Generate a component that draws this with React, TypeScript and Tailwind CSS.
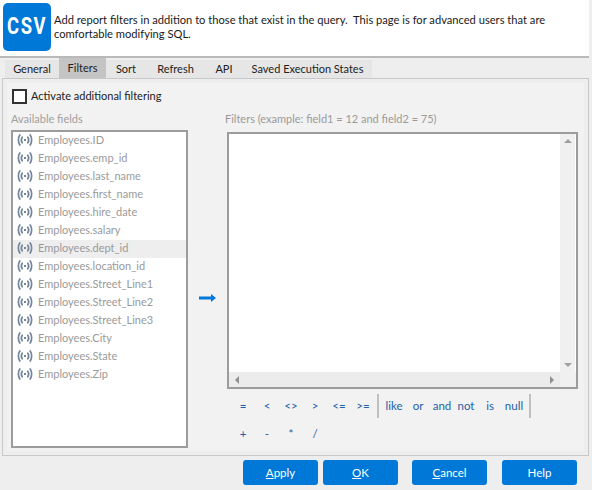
const fields = ["ID","emp_id","last_name","first_name","hire_date","salary","dept_id","location_id","Street_Line1","Street_Line2","Street_Line3","City","State","Zip"];
const tabs = ["General","Filters","Sort","Refresh","API","Saved Execution States"];
const tabW = [54,47,40,59,38,129];
const row1 = ["=","<","<>",">","<=",">="];
const row1b = ["like","or","and","not","is","null"];
const row2 = ["+","-","*","/"];

function Signal() {
  return (
    <svg width="16" height="12" viewBox="0 0 16 12" fill="none" stroke="#74869a" strokeWidth="1.7" strokeLinecap="round" className="shrink-0">
      <path d="M2.8 1C0.9 3.8 0.9 8.2 2.8 11" />
      <path d="M13.2 1C15.1 3.8 15.1 8.2 13.2 11" />
      <path d="M5.2 3.2C4.1 4.9 4.1 7.1 5.2 8.8" />
      <path d="M10.8 3.2C11.9 4.9 11.9 7.1 10.8 8.8" />
      <path d="M7 6H9" strokeWidth="2" strokeLinecap="butt" />
    </svg>
  );
}

function Op({ t }: { t: string }) {
  return <span className="w-[24px] text-center text-[#1f5fa8]">{t}</span>;
}

function Btn({ u, rest }: { u?: string; rest: string }) {
  return (
    <button className="w-[75px] h-[25px] rounded-[3px] bg-[#0078d7] text-white text-[11.5px] flex items-center justify-center">
      {u && <span className="underline">{u}</span>}{rest}
    </button>
  );
}

export default function App() {
  return (
    <div className="w-[592px] h-[490px] bg-[#eeeeee] text-[11px] overflow-hidden flex flex-col" style={{ fontFamily: '"Lato", sans-serif' }}>
      <div className="h-[58px] w-[589px] bg-white border-b-2 border-[#b9b9b9] flex items-start pl-[3px] pt-[3px] shrink-0">
        <div className="w-[48px] h-[48px] rounded-[5px] bg-[#0078d7] text-white font-bold text-[23px] flex items-center justify-center tracking-[2px] pl-[1px]" style={{ fontFamily: '"Roboto", sans-serif' }}>
          <span className="scale-x-[0.8] pt-[1px]">CSV</span>
        </div>
        <p className="ml-[3px] mt-[10px] w-[530px] leading-[14px] text-[11.15px] text-[#1a1a1a] whitespace-pre-wrap">{"Add report filters in addition to those that exist in the query.  This page is for advanced users that are\ncomfortable modifying SQL."}</p>
      </div>
      <div className="h-[20px] flex pl-[5px] shrink-0 text-[#222]">
        {tabs.map((t, i) => (
          <div key={t} style={{ width: tabW[i] }} className={"flex items-center justify-center " + (i === 1 ? "bg-[#c4c4c4] h-[20px]" : "bg-[#e6e6e6] h-[18px] mt-[2px]")}>{t}</div>
        ))}
      </div>
      <div className="ml-[2px] w-[587px] h-[378px] border border-[#c8c8c8] bg-[#eeeeee] shrink-0 p-[4px]">
        <div className="h-full bg-[#f2f2f2] flex flex-col">
          <label className="flex items-center h-[16px] mt-[5px] ml-[5px] text-[#222]">
            <span className="w-[15px] h-[15px] border-2 border-[#333] bg-white mr-[4px]" />
            Activate additional filtering
          </label>
          <div className="flex mt-[6px] ml-[4px]">
            <div className="w-[177px] flex flex-col">
              <div className="h-[20px] text-[#a0a0a0] leading-[18px]">Available fields</div>
              <div className="h-[318px] border-2 border-[#9c9c9c] bg-white text-[#9a9a9a]">
                {fields.map((f) => (
                  <div key={f} className={"h-[18px] flex items-center pl-[4px] gap-[5px] pb-[2px] " + (f === "dept_id" ? "bg-[#eeeeee]" : "")}>
                    <Signal />
                    <span>Employees.{f}</span>
                  </div>
                ))}
              </div>
            </div>
            <div className="w-[39px] flex items-center justify-center pt-[38px]">
              <svg width="17" height="8" viewBox="0 0 17 8">
                <path d="M0 2.5H12V0L17 4L12 8V5.5H0Z" fill="#0078d7" />
              </svg>
            </div>
            <div className="w-[351px] flex flex-col">
              <div className="h-[22px] ml-[-2px] text-[#9a9a9a] leading-[18px] whitespace-nowrap">Filters (example: field1 = 12 and field2 = 75)</div>
              <div className="h-[257px] border-2 border-[#9c9c9c] bg-white flex flex-col">
                <div className="flex-1 flex min-h-0">
                  <div className="flex-1" />
                  <div className="w-[15px] bg-[#f0f0f0] flex flex-col justify-between items-center py-[5px] mr-[1px]">
                    <span className="w-0 h-0 border-x-[4px] border-x-transparent border-b-[4px] border-b-[#a0a0a0]" />
                    <span className="w-0 h-0 border-x-[4px] border-x-transparent border-t-[4px] border-t-[#a0a0a0]" />
                  </div>
                </div>
                <div className="h-[15px] flex bg-[#eeeeee]">
                  <div className="w-[331px] flex items-center justify-between px-[6px] bg-[#ececec]">
                    <span className="w-0 h-0 border-y-[4px] border-y-transparent border-r-[4px] border-r-[#909090]" />
                    <span className="w-0 h-0 border-y-[4px] border-y-transparent border-l-[4px] border-l-[#909090]" />
                  </div>
                  <div className="flex-1 bg-[#f0f0f0]" />
                </div>
              </div>
              <div className="flex items-center h-[24px] mt-[5px] ml-[4px] text-[11.5px]">
                {row1.map((t) => <Op key={t} t={t} />)}
                <span className="w-[2px] h-[24px] bg-[#c0c0c0] ml-[2px] mr-[3px]" />
                {row1b.map((t) => <Op key={t} t={t} />)}
                <span className="w-[2px] h-[24px] bg-[#c0c0c0] ml-[3px]" />
              </div>
              <div className="flex items-center h-[24px] mt-[4px] ml-[4px] text-[11.5px]">
                {row2.map((t) => <Op key={t} t={t} />)}
              </div>
            </div>
          </div>
        </div>
      </div>
      <div className="flex mt-[4px] pl-[243px]">
        <Btn u="A" rest="pply" />
        <div className="w-[5px]" />
        <Btn u="O" rest="K" />
        <div className="w-[14px]" />
        <Btn u="C" rest="ancel" />
        <div className="w-[15px]" />
        <Btn rest="Help" />
      </div>
    </div>
  );
}
